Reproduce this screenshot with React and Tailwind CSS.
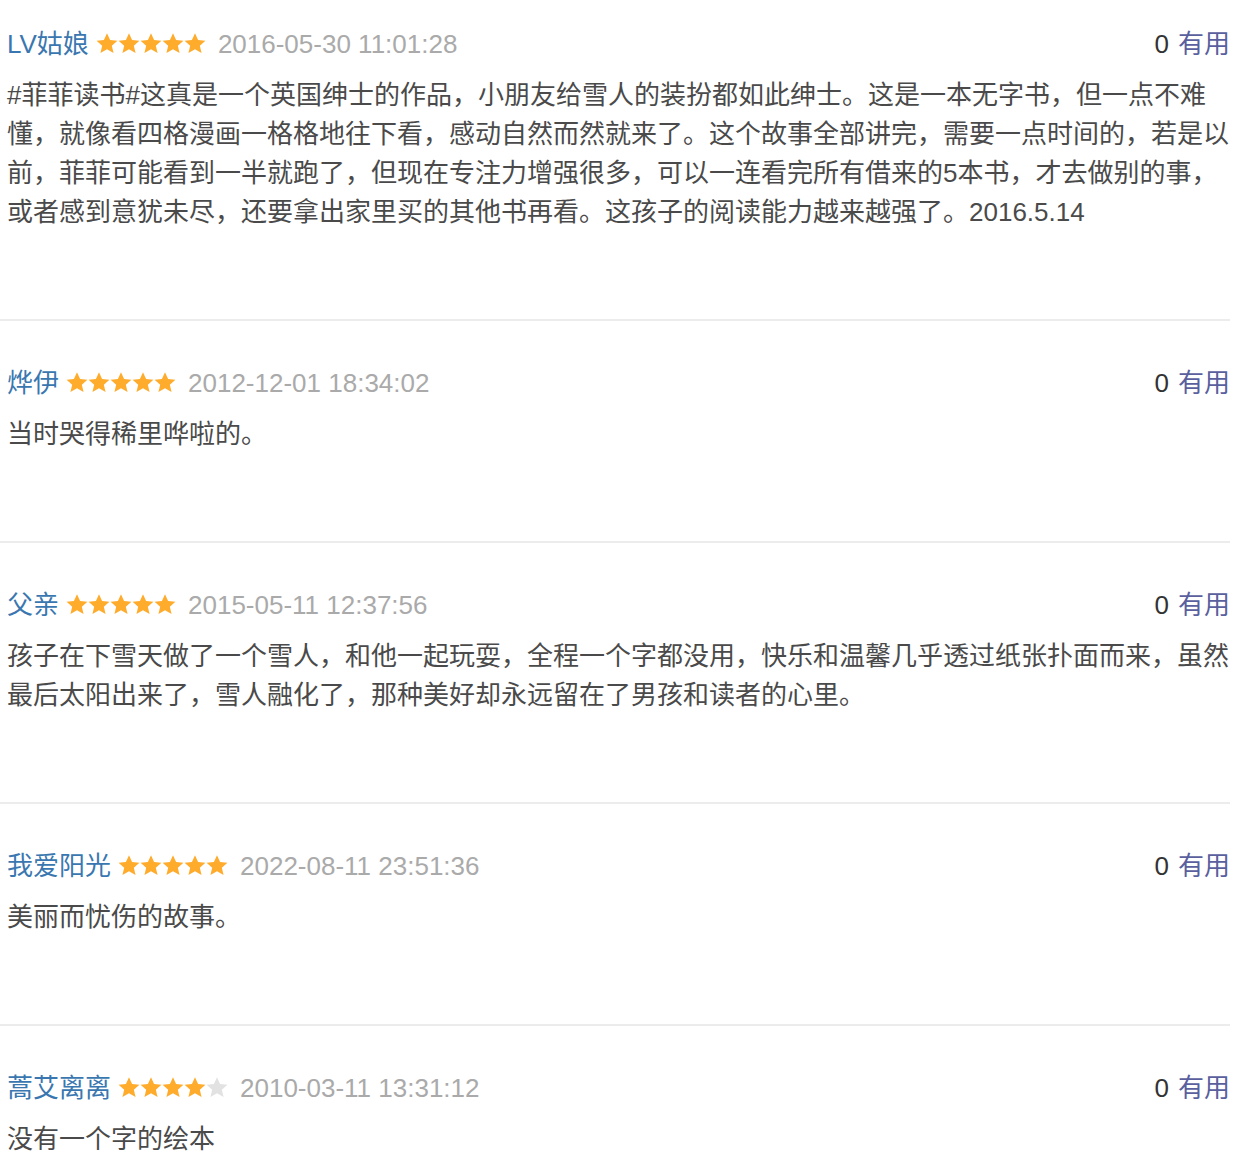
const reviews = [
  {
    name: "LV姑娘",
    stars: 5,
    time: "2016-05-30 11:01:28",
    text: "#菲菲读书#这真是一个英国绅士的作品，小朋友给雪人的装扮都如此绅士。这是一本无字书，但一点不难懂，就像看四格漫画一格格地往下看，感动自然而然就来了。这个故事全部讲完，需要一点时间的，若是以前，菲菲可能看到一半就跑了，但现在专注力增强很多，可以一连看完所有借来的5本书，才去做别的事，或者感到意犹未尽，还要拿出家里买的其他书再看。这孩子的阅读能力越来越强了。2016.5.14",
  },
  { name: "烨伊", stars: 5, time: "2012-12-01 18:34:02", text: "当时哭得稀里哗啦的。" },
  {
    name: "父亲",
    stars: 5,
    time: "2015-05-11 12:37:56",
    text: "孩子在下雪天做了一个雪人，和他一起玩耍，全程一个字都没用，快乐和温馨几乎透过纸张扑面而来，虽然最后太阳出来了，雪人融化了，那种美好却永远留在了男孩和读者的心里。",
  },
  { name: "我爱阳光", stars: 5, time: "2022-08-11 23:51:36", text: "美丽而忧伤的故事。" },
  { name: "蒿艾离离", stars: 4, time: "2010-03-11 13:31:12", text: "没有一个字的绘本", last: true },
];

function Star({ on }) {
  return (
    <svg width="22" height="21" viewBox="0.6 1.4 22.8 21.4" className="shrink-0">
      <path
        d="M12 1.5l3.2 7.1 7.6.7-5.8 5.1 1.8 7.6L12 18l-6.8 4 1.8-7.6-5.8-5.1 7.6-.7z"
        fill={on ? "#ffac2d" : "#e2e2e2"}
      />
    </svg>
  );
}

function Review({ r, first }) {
  return (
    <div
      className={
        "w-[1230px] pl-[7px] " +
        (first ? "pt-[25px] " : "pt-[43px] ") +
        (r.last ? "pb-0" : "pb-[87px] border-b-2 border-[#ececec]")
      }
    >
      <div className="flex items-center h-[39px] text-[26px]">
        <span className="text-[#3a77b0]">{r.name}</span>
        <span className="flex ml-[7px] -mt-[2px]">
          {[0, 1, 2, 3, 4].map((i) => (
            <Star key={i} on={i < r.stars} />
          ))}
        </span>
        <span className="ml-[12px] text-[#aaaaaa]">{r.time}</span>
        <span className="ml-auto text-[#333]">0</span>
        <span className="ml-[9px] text-[#5a5f9e]">有用</span>
      </div>
      <div className="mt-[12px] text-[26px] leading-[39px] text-[#4a4a4a]">{r.text}</div>
    </div>
  );
}

export default function App() {
  return (
    <div
      className="bg-white min-h-screen"
      style={{ fontFamily: '"Liberation Sans", "Noto Sans CJK SC", sans-serif' }}
    >
      {reviews.map((r, i) => (
        <Review key={i} r={r} first={i === 0} />
      ))}
    </div>
  );
}
